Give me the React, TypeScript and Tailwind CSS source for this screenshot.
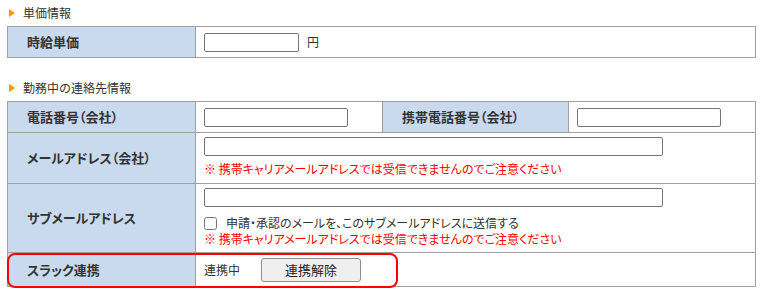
const font = { fontFamily: '"Noto Sans CJK JP", "Noto Sans", sans-serif' }

function SectionTitle({ children }: { children: React.ReactNode }) {
  return (
    <div className="flex items-center h-[17px] text-[12px] text-[#333]">
      <span className="ml-[2px] mr-[8px] w-0 h-0 border-y-[4px] border-y-transparent border-l-[6px] border-l-[#f39800]" />
      {children}
    </div>
  )
}

function Label({ children, className = '' }: { children: React.ReactNode; className?: string }) {
  return (
    <th className={`bg-[#c9daee] text-left align-middle font-bold text-[13px] text-[#333] pl-[19px] border border-[#a0a0a0] [font-feature-settings:'palt'] ${className}`}>
      {children}
    </th>
  )
}

function TextInput({ w }: { w: string }) {
  return <input type="text" className={`block ${w} h-[19px] border border-[#767676] rounded-[2px] bg-white`} />
}

function Notice() {
  return (
    <div className="text-[12px] text-[#ff0000] leading-[14px] [font-feature-settings:'palt']">
      ※ 携帯キャリアメールアドレスでは受信できませんのでご注意ください
    </div>
  )
}

export default function App() {
  return (
    <div className="w-[762px] h-[304px] bg-white pl-[7px] pt-[4px]" style={font}>
      <SectionTitle>単価情報</SectionTitle>
      <table className="mt-[5px] w-[749px] border-collapse border border-[#a0a0a0]">
        <tbody>
          <tr className="h-[31px]">
            <Label className="w-[188px]">時給単価</Label>
            <td className="border border-[#a0a0a0] pl-[8px]">
              <div className="flex items-center gap-[8px] text-[12px] text-[#333]">
                <TextInput w="w-[95px]" />
                <span>円</span>
              </div>
            </td>
          </tr>
        </tbody>
      </table>

      <div className="mt-[21px]">
        <SectionTitle>勤務中の連絡先情報</SectionTitle>
      </div>
      <div className="relative mt-[5px] w-[749px]">
        <table className="w-full border-collapse border border-[#a0a0a0] table-fixed">
          <colgroup>
            <col className="w-[188px]" />
            <col className="w-[187px]" />
            <col className="w-[186px]" />
            <col />
          </colgroup>
          <tbody>
            <tr className="h-[31px]">
              <Label>電話番号（会社）</Label>
              <td className="border border-[#a0a0a0] pl-[8px]">
                <TextInput w="w-[144px]" />
              </td>
              <Label>携帯電話番号（会社）</Label>
              <td className="border border-[#a0a0a0] pl-[8px]">
                <TextInput w="w-[144px]" />
              </td>
            </tr>
            <tr className="h-[51px]">
              <Label>メールアドレス（会社）</Label>
              <td colSpan={3} className="border border-[#a0a0a0] pl-[8px] pt-[4px] align-top">
                <TextInput w="w-[459px]" />
                <div className="mt-[6px]">
                  <Notice />
                </div>
              </td>
            </tr>
            <tr className="h-[69px]">
              <Label>サブメールアドレス</Label>
              <td colSpan={3} className="border border-[#a0a0a0] pl-[8px] pt-[4px] align-top">
                <TextInput w="w-[459px]" />
                <label className="mt-[8px] flex items-center gap-[9px] h-[16px] text-[12px] text-[#333] [font-feature-settings:'palt']">
                  <input type="checkbox" className="w-[13px] h-[13px] m-0" />
                  申請・承認のメールを、このサブメールアドレスに送信する
                </label>
                <div className="mt-[1px]">
                  <Notice />
                </div>
              </td>
            </tr>
            <tr className="h-[34px]">
              <Label>スラック連携</Label>
              <td colSpan={3} className="border border-[#a0a0a0] pl-[8px]">
                <div className="flex items-center gap-[21px] text-[12px] text-[#333]">
                  <span>連携中</span>
                  <button className="w-[100px] h-[24px] border border-[#8f8f8f] rounded-[3px] bg-[#efefef] text-[13px] text-[#222]">
                    連携解除
                  </button>
                </div>
              </td>
            </tr>
          </tbody>
        </table>
        <div className="absolute left-0 bottom-[-1px] w-[391px] h-[35px] border-2 border-[#ff0000] rounded-[8px] pointer-events-none" />
      </div>
    </div>
  )
}
